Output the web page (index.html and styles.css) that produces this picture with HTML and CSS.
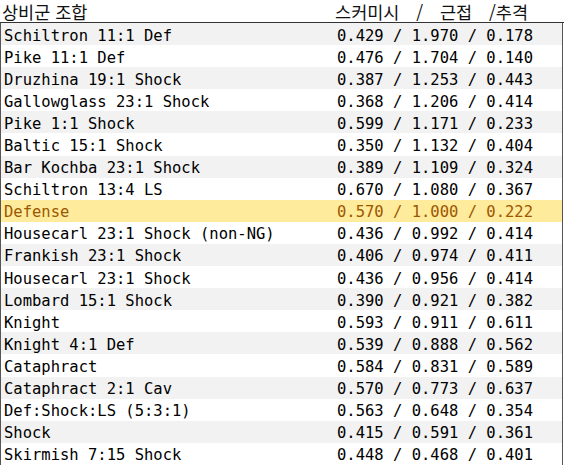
FILE: index.html
```html
<!DOCTYPE html>
<html lang="ko">
<head>
<meta charset="utf-8">
<link rel="stylesheet" href="styles.css">
</head>
<body>
<div class="sheet">
  <div class="head">
    <span class="h-name">상비군 조합</span>
    <span class="h-vals">스커미시  /  근접  /추격</span>
  </div>
  <div class="rows">
    <div class="row"><span>Schiltron 11:1 Def</span><span>0.429 / 1.970 / 0.178</span></div>
    <div class="row"><span>Pike 11:1 Def</span><span>0.476 / 1.704 / 0.140</span></div>
    <div class="row"><span>Druzhina 19:1 Shock</span><span>0.387 / 1.253 / 0.443</span></div>
    <div class="row"><span>Gallowglass 23:1 Shock</span><span>0.368 / 1.206 / 0.414</span></div>
    <div class="row"><span>Pike 1:1 Shock</span><span>0.599 / 1.171 / 0.233</span></div>
    <div class="row"><span>Baltic 15:1 Shock</span><span>0.350 / 1.132 / 0.404</span></div>
    <div class="row"><span>Bar Kochba 23:1 Shock</span><span>0.389 / 1.109 / 0.324</span></div>
    <div class="row"><span>Schiltron 13:4 LS</span><span>0.670 / 1.080 / 0.367</span></div>
    <div class="row hl"><span>Defense</span><span>0.570 / 1.000 / 0.222</span></div>
    <div class="row"><span>Housecarl 23:1 Shock (non-NG)</span><span>0.436 / 0.992 / 0.414</span></div>
    <div class="row"><span>Frankish 23:1 Shock</span><span>0.406 / 0.974 / 0.411</span></div>
    <div class="row"><span>Housecarl 23:1 Shock</span><span>0.436 / 0.956 / 0.414</span></div>
    <div class="row"><span>Lombard 15:1 Shock</span><span>0.390 / 0.921 / 0.382</span></div>
    <div class="row"><span>Knight</span><span>0.593 / 0.911 / 0.611</span></div>
    <div class="row"><span>Knight 4:1 Def</span><span>0.539 / 0.888 / 0.562</span></div>
    <div class="row"><span>Cataphract</span><span>0.584 / 0.831 / 0.589</span></div>
    <div class="row"><span>Cataphract 2:1 Cav</span><span>0.570 / 0.773 / 0.637</span></div>
    <div class="row"><span>Def:Shock:LS (5:3:1)</span><span>0.563 / 0.648 / 0.354</span></div>
    <div class="row"><span>Shock</span><span>0.415 / 0.591 / 0.361</span></div>
    <div class="row"><span>Skirmish 7:15 Shock</span><span>0.448 / 0.468 / 0.401</span></div>
  </div>
</div>
</body>
</html>
```

FILE: styles.css
```css
html, body {
  margin: 0;
  padding: 0;
  background: #ffffff;
}
.sheet {
  width: 564px;
  height: 466px;
  overflow: hidden;
}
.head {
  display: flex;
  justify-content: space-between;
  align-items: center;
  box-sizing: border-box;
  height: 23px;
  padding: 0 36px 0 2px;
  font-family: "Noto Sans CJK KR", "Noto Sans", sans-serif;
  font-size: 17.5px;
  line-height: 21px;
  color: #111;
  border-bottom: 1px solid #333;
  white-space: pre;
}
.h-vals {
  word-spacing: 3.5px;
}
.rows {
  border-left: 1px solid #555;
  border-right: 1px solid #555;
  margin-right: 1px;
}
.row {
  display: flex;
  justify-content: space-between;
  align-items: center;
  box-sizing: border-box;
  height: 22.1px;
  padding: 3px 29px 0 3px;
  font-family: "DejaVu Sans Mono", "Liberation Mono", monospace;
  font-size: 15.5px;
  line-height: 18px;
  color: #000;
  white-space: pre;
}
.row:nth-child(odd) {
  background: #f2f2f2;
}
.row.hl {
  background: #ffeb9c;
  color: #9c5700;
}
```
